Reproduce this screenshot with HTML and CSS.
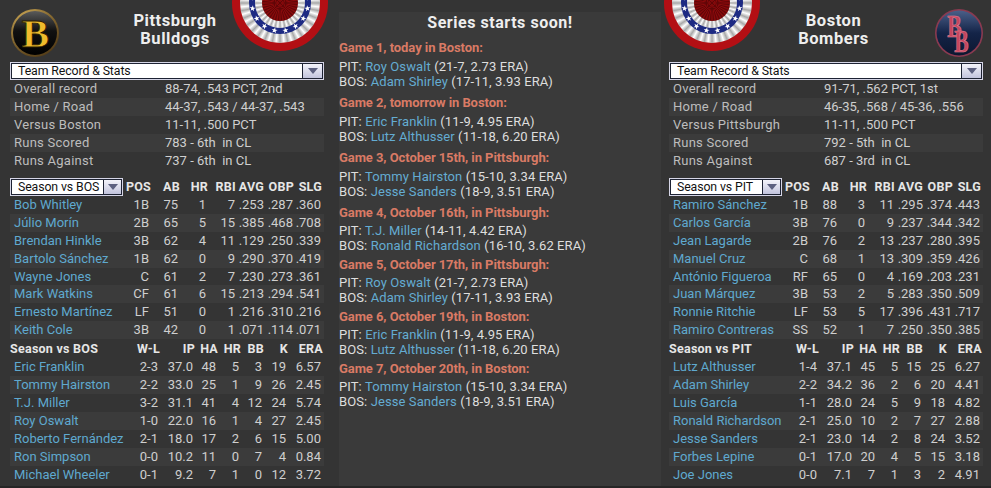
FILE: index.html
```html
<!DOCTYPE html>
<html lang="en">
<head>
<meta charset="utf-8">
<title>Series preview</title>
<link rel="stylesheet" href="styles.css">
</head>
<body>
<div class="page">
  <section class="team">
    <header class="team-head">
      <svg class="logo" viewBox="0 0 48 48">
        <defs>
          <radialGradient id="ringA" cx="35%" cy="25%" r="85%"><stop offset="0" stop-color="#d8b25a"/><stop offset="1" stop-color="#4a3413"/></radialGradient>
          <linearGradient id="ballA" x1="0" y1="0" x2="0" y2="1"><stop offset="0" stop-color="#5a5a5a"/><stop offset=".45" stop-color="#111"/><stop offset="1" stop-color="#000"/></linearGradient>
        </defs>
        <circle cx="24" cy="24" r="24" fill="url(#ringA)"/>
        <circle cx="24" cy="24" r="22" fill="url(#ballA)"/>
        <text class="logo-b" transform="translate(24.5 38) scale(1.08 1.05)">B</text>
      </svg>
      <h2 class="team-name">Pittsburgh<br>Bulldogs</h2>
      <div class="rosette rosette-l">
        <div class="ros-red"><div class="ros-pleat"><div class="ros-blue"><div class="ros-pleat ros-pleat-in"><div class="ros-core"></div></div></div></div></div>
        <svg class="ros-stars" viewBox="-48 -48 96 96"><defs><polygon id="st" points="0,-3 .8,-1 3,-1 1.2,.4 1.9,2.5 0,1.2 -1.9,2.5 -1.2,.4 -3,-1 -.8,-1" fill="#fff"/></defs>
          <use href="#st" transform="rotate(11.25) translate(0 28)"/><use href="#st" transform="rotate(33.75) translate(0 28)"/><use href="#st" transform="rotate(56.25) translate(0 28)"/><use href="#st" transform="rotate(78.75) translate(0 28)"/><use href="#st" transform="rotate(101.25) translate(0 28)"/><use href="#st" transform="rotate(-11.25) translate(0 28)"/><use href="#st" transform="rotate(-33.75) translate(0 28)"/><use href="#st" transform="rotate(-56.25) translate(0 28)"/><use href="#st" transform="rotate(-78.75) translate(0 28)"/><use href="#st" transform="rotate(-101.25) translate(0 28)"/>
        </svg>
      </div>
    </header>
    <div class="select select-wide"><span class="select-text">Team Record &amp; Stats</span><span class="select-btn"><i class="arrow"></i></span></div>
    <dl class="stats">
      <div class="stat"><dt>Overall record</dt><dd>88-74, .543 PCT, 2nd</dd></div>
      <div class="stat"><dt>Home / Road</dt><dd>44-37, .543 / 44-37, .543</dd></div>
      <div class="stat"><dt>Versus Boston</dt><dd>11-11, .500 PCT</dd></div>
      <div class="stat"><dt>Runs Scored</dt><dd>783 - 6th&nbsp; in CL</dd></div>
      <div class="stat"><dt>Runs Against</dt><dd>737 - 6th&nbsp; in CL</dd></div>
    </dl>
    <table class="grid batters">
      <thead><tr><th class="sel-cell"><div class="select select-small"><span class="select-text">Season vs BOS</span><span class="select-btn"><i class="arrow"></i></span></div></th><th>POS</th><th>AB</th><th>HR</th><th>RBI</th><th>AVG</th><th>OBP</th><th>SLG</th></tr></thead>
      <tbody>
        <tr><td>Bob Whitley</td><td>1B</td><td>75</td><td>1</td><td>7</td><td>.253</td><td>.287</td><td>.360</td></tr>
        <tr><td>Júlio Morín</td><td>2B</td><td>65</td><td>5</td><td>15</td><td>.385</td><td>.468</td><td>.708</td></tr>
        <tr><td>Brendan Hinkle</td><td>3B</td><td>62</td><td>4</td><td>11</td><td>.129</td><td>.250</td><td>.339</td></tr>
        <tr><td>Bartolo Sánchez</td><td>1B</td><td>62</td><td>0</td><td>9</td><td>.290</td><td>.370</td><td>.419</td></tr>
        <tr><td>Wayne Jones</td><td>C</td><td>61</td><td>2</td><td>7</td><td>.230</td><td>.273</td><td>.361</td></tr>
        <tr><td>Mark Watkins</td><td>CF</td><td>61</td><td>6</td><td>15</td><td>.213</td><td>.294</td><td>.541</td></tr>
        <tr><td>Ernesto Martínez</td><td>LF</td><td>51</td><td>0</td><td>1</td><td>.216</td><td>.310</td><td>.216</td></tr>
        <tr><td>Keith Cole</td><td>3B</td><td>42</td><td>0</td><td>1</td><td>.071</td><td>.114</td><td>.071</td></tr>
      </tbody>
    </table>
    <table class="grid pitchers">
      <thead><tr><th>Season vs BOS</th><th>W-L</th><th>IP</th><th>HA</th><th>HR</th><th>BB</th><th>K</th><th>ERA</th></tr></thead>
      <tbody>
        <tr><td>Eric Franklin</td><td>2-3</td><td>37.0</td><td>48</td><td>5</td><td>3</td><td>19</td><td>6.57</td></tr>
        <tr><td>Tommy Hairston</td><td>2-2</td><td>33.0</td><td>25</td><td>1</td><td>9</td><td>26</td><td>2.45</td></tr>
        <tr><td>T.J. Miller</td><td>3-2</td><td>31.1</td><td>41</td><td>4</td><td>12</td><td>24</td><td>5.74</td></tr>
        <tr><td>Roy Oswalt</td><td>1-0</td><td>22.0</td><td>16</td><td>1</td><td>4</td><td>27</td><td>2.45</td></tr>
        <tr><td>Roberto Fernández</td><td>2-1</td><td>18.0</td><td>17</td><td>2</td><td>6</td><td>15</td><td>5.00</td></tr>
        <tr><td>Ron Simpson</td><td>0-0</td><td>10.2</td><td>11</td><td>0</td><td>7</td><td>4</td><td>0.84</td></tr>
        <tr><td>Michael Wheeler</td><td>0-1</td><td>9.2</td><td>7</td><td>1</td><td>0</td><td>12</td><td>3.72</td></tr>
      </tbody>
    </table>
  </section>

  <main class="series">
    <h1 class="series-title">Series starts soon!</h1>
    <article class="game"><h3>Game 1, today in Boston:</h3><p>PIT: <a>Roy Oswalt</a> (21-7, 2.73 ERA)</p><p>BOS: <a>Adam Shirley</a> (17-11, 3.93 ERA)</p></article>
    <article class="game"><h3>Game 2, tomorrow in Boston:</h3><p>PIT: <a>Eric Franklin</a> (11-9, 4.95 ERA)</p><p>BOS: <a>Lutz Althusser</a> (11-18, 6.20 ERA)</p></article>
    <article class="game"><h3>Game 3, October 15th, in Pittsburgh:</h3><p>PIT: <a>Tommy Hairston</a> (15-10, 3.34 ERA)</p><p>BOS: <a>Jesse Sanders</a> (18-9, 3.51 ERA)</p></article>
    <article class="game"><h3>Game 4, October 16th, in Pittsburgh:</h3><p>PIT: <a>T.J. Miller</a> (14-11, 4.42 ERA)</p><p>BOS: <a>Ronald Richardson</a> (16-10, 3.62 ERA)</p></article>
    <article class="game"><h3>Game 5, October 17th, in Pittsburgh:</h3><p>PIT: <a>Roy Oswalt</a> (21-7, 2.73 ERA)</p><p>BOS: <a>Adam Shirley</a> (17-11, 3.93 ERA)</p></article>
    <article class="game"><h3>Game 6, October 19th, in Boston:</h3><p>PIT: <a>Eric Franklin</a> (11-9, 4.95 ERA)</p><p>BOS: <a>Lutz Althusser</a> (11-18, 6.20 ERA)</p></article>
    <article class="game"><h3>Game 7, October 20th, in Boston:</h3><p>PIT: <a>Tommy Hairston</a> (15-10, 3.34 ERA)</p><p>BOS: <a>Jesse Sanders</a> (18-9, 3.51 ERA)</p></article>
  </main>

  <section class="team team-right">
    <header class="team-head">
      <div class="rosette rosette-r">
        <div class="ros-red"><div class="ros-pleat"><div class="ros-blue"><div class="ros-pleat ros-pleat-in"><div class="ros-core"></div></div></div></div></div>
        <svg class="ros-stars" viewBox="-48 -48 96 96">
          <use href="#st" transform="rotate(11.25) translate(0 28)"/><use href="#st" transform="rotate(33.75) translate(0 28)"/><use href="#st" transform="rotate(56.25) translate(0 28)"/><use href="#st" transform="rotate(78.75) translate(0 28)"/><use href="#st" transform="rotate(101.25) translate(0 28)"/><use href="#st" transform="rotate(-11.25) translate(0 28)"/><use href="#st" transform="rotate(-33.75) translate(0 28)"/><use href="#st" transform="rotate(-56.25) translate(0 28)"/><use href="#st" transform="rotate(-78.75) translate(0 28)"/><use href="#st" transform="rotate(-101.25) translate(0 28)"/>
        </svg>
      </div>
      <h2 class="team-name">Boston<br>Bombers</h2>
      <svg class="logo logo-r" viewBox="0 0 48 48">
        <defs>
          <linearGradient id="ballB" x1="0" y1="0" x2="0" y2="1"><stop offset="0" stop-color="#4a5f88"/><stop offset=".5" stop-color="#142448"/><stop offset="1" stop-color="#0c1730"/></linearGradient>
        </defs>
        <circle cx="24" cy="24" r="24" fill="#8a3a50"/>
        <circle cx="24" cy="24" r="22.4" fill="url(#ballB)"/>
        <text class="logo-rb" transform="translate(19.5 28) scale(.8 1.15)">B</text>
        <text class="logo-rb" transform="translate(26.5 43) scale(.8 1.15)">B</text>
      </svg>
    </header>
    <div class="select select-wide"><span class="select-text">Team Record &amp; Stats</span><span class="select-btn"><i class="arrow"></i></span></div>
    <dl class="stats">
      <div class="stat"><dt>Overall record</dt><dd>91-71, .562 PCT, 1st</dd></div>
      <div class="stat"><dt>Home / Road</dt><dd>46-35, .568 / 45-36, .556</dd></div>
      <div class="stat"><dt>Versus Pittsburgh</dt><dd>11-11, .500 PCT</dd></div>
      <div class="stat"><dt>Runs Scored</dt><dd>792 - 5th&nbsp; in CL</dd></div>
      <div class="stat"><dt>Runs Against</dt><dd>687 - 3rd&nbsp; in CL</dd></div>
    </dl>
    <table class="grid batters">
      <thead><tr><th class="sel-cell"><div class="select select-small"><span class="select-text">Season vs PIT</span><span class="select-btn"><i class="arrow"></i></span></div></th><th>POS</th><th>AB</th><th>HR</th><th>RBI</th><th>AVG</th><th>OBP</th><th>SLG</th></tr></thead>
      <tbody>
        <tr><td>Ramiro Sánchez</td><td>1B</td><td>88</td><td>3</td><td>11</td><td>.295</td><td>.374</td><td>.443</td></tr>
        <tr><td>Carlos García</td><td>3B</td><td>76</td><td>0</td><td>9</td><td>.237</td><td>.344</td><td>.342</td></tr>
        <tr><td>Jean Lagarde</td><td>2B</td><td>76</td><td>2</td><td>13</td><td>.237</td><td>.280</td><td>.395</td></tr>
        <tr><td>Manuel Cruz</td><td>C</td><td>68</td><td>1</td><td>13</td><td>.309</td><td>.359</td><td>.426</td></tr>
        <tr><td>António Figueroa</td><td>RF</td><td>65</td><td>0</td><td>4</td><td>.169</td><td>.203</td><td>.231</td></tr>
        <tr><td>Juan Márquez</td><td>3B</td><td>53</td><td>2</td><td>5</td><td>.283</td><td>.350</td><td>.509</td></tr>
        <tr><td>Ronnie Ritchie</td><td>LF</td><td>53</td><td>5</td><td>17</td><td>.396</td><td>.431</td><td>.717</td></tr>
        <tr><td>Ramiro Contreras</td><td>SS</td><td>52</td><td>1</td><td>7</td><td>.250</td><td>.350</td><td>.385</td></tr>
      </tbody>
    </table>
    <table class="grid pitchers">
      <thead><tr><th>Season vs PIT</th><th>W-L</th><th>IP</th><th>HA</th><th>HR</th><th>BB</th><th>K</th><th>ERA</th></tr></thead>
      <tbody>
        <tr><td>Lutz Althusser</td><td>1-4</td><td>37.1</td><td>45</td><td>5</td><td>15</td><td>25</td><td>6.27</td></tr>
        <tr><td>Adam Shirley</td><td>2-2</td><td>34.2</td><td>36</td><td>2</td><td>6</td><td>20</td><td>4.41</td></tr>
        <tr><td>Luis García</td><td>1-1</td><td>28.0</td><td>24</td><td>5</td><td>9</td><td>18</td><td>4.82</td></tr>
        <tr><td>Ronald Richardson</td><td>2-1</td><td>25.0</td><td>10</td><td>2</td><td>7</td><td>27</td><td>2.88</td></tr>
        <tr><td>Jesse Sanders</td><td>2-1</td><td>23.0</td><td>14</td><td>2</td><td>8</td><td>24</td><td>3.52</td></tr>
        <tr><td>Forbes Lepine</td><td>0-1</td><td>17.0</td><td>20</td><td>4</td><td>5</td><td>15</td><td>3.18</td></tr>
        <tr><td>Joe Jones</td><td>0-0</td><td>7.1</td><td>7</td><td>1</td><td>3</td><td>2</td><td>4.91</td></tr>
      </tbody>
    </table>
  </section>
</div>
</body>
</html>
```
FILE: styles.css
```css
* { box-sizing: border-box; }
html, body { margin: 0; height: 100%; }
body {
  background: #343434;
  color: #cfcfcf;
  font-family: Roboto, "Liberation Sans", sans-serif;
  font-size: 13px;
  letter-spacing: 0;
  overflow: hidden;
}
.page {
  display: grid;
  grid-template-columns: 339px 322px 330px;
  height: 488px;
  overflow: hidden;
  border-bottom: 2px solid #262626;
}
.team { padding: 0 7px 0 10px; position: relative; }
.team-right { padding: 0 8px 0 8px; }
.team-head {
  height: 62px;
  position: relative;
  display: flex;
  justify-content: center;
}
.team-name {
  margin: 0;
  padding: 12px 0 0 8px;
  width: 100%;
  text-align: center;
  color: #eee;
  font-size: 16.5px;
  line-height: 18px;
  font-weight: 700;
  letter-spacing: .55px;
}
.team-right .team-name { padding-left: 15px; }
.logo { position: absolute; left: 1px; top: 9px; width: 48px; height: 48px; }
.logo-r { left: auto; right: 0; }
.logo-b {
  font-family: "Liberation Serif", serif;
  font-weight: 700;
  font-size: 38px;
  fill: #efbb2c;
  stroke: #2a1c00;
  stroke-width: .8px;
  text-anchor: middle;
}
.logo-rb {
  font-family: "Liberation Serif", serif;
  font-weight: 700;
  font-size: 27px;
  fill: #c4465f;
  stroke: #e58a9b;
  stroke-width: .5px;
  text-anchor: middle;
}
.rosette { position: absolute; top: -45px; width: 96px; height: 96px; }
.rosette-l { left: 222px; }
.rosette-r { left: -5px; }
.ros-red, .ros-pleat, .ros-blue, .ros-core {
  border-radius: 50%;
  display: flex;
  align-items: center;
  justify-content: center;
}
.ros-red { width: 96px; height: 96px; background: radial-gradient(circle, #b30f14 85%, #6e0a0c 100%); }
.ros-pleat {
  width: 80px; height: 80px;
  background: repeating-conic-gradient(from 5.6deg, #fff 0deg, #a8a8a8 5.6deg, #fff 11.25deg);
}
.ros-blue { width: 62px; height: 62px; background: #1d2a83; }
.ros-pleat-in { width: 50px; height: 50px; }
.ros-core {
  width: 36px; height: 36px;
  background: repeating-conic-gradient(#8f0a0c 0deg, #5e0506 5deg, #8f0a0c 10deg);
}
.ros-stars { position: absolute; inset: 0; width: 96px; height: 96px; }

.select {
  display: flex;
  background: #fff;
  border: 1px solid #d5d5e6;
  outline: 1px solid #1d2233;
  outline-offset: -2px;
  color: #111;
  height: 18px;
  font-size: 12.3px;
  line-height: 16px;
  letter-spacing: -.1px;
}
.select-wide { width: 314px; }
.select-small { width: 113px; }
.select-small .select-btn { width: 18px; }
.select-text { flex: 1; padding-left: 7px; white-space: nowrap; overflow: hidden; text-align: left; font-weight: 400; }
.select-btn {
  width: 20px;
  border-left: 1px solid #1d2233;
  background: linear-gradient(#f3f3fa, #c2c4dd);
  display: flex;
  align-items: center;
  justify-content: center;
  margin: 1px 1px 1px 0;
}
.arrow {
  width: 0; height: 0;
  border-left: 5px solid transparent;
  border-right: 5px solid transparent;
  border-top: 6px solid #5c6080;
}

.stats { margin: 0; width: 314px; }
.stat {
  display: grid;
  grid-template-columns: 151px 1fr;
  height: 18px;
  line-height: 18px;
  padding-left: 4px;
}
.stat:nth-child(even) { background: #3b3b3b; }
.stat dt { color: #bdbdbd; letter-spacing: .25px; white-space: nowrap; }
.stat dd { margin: 0; color: #cfcfcf; white-space: nowrap; }

.grid { border-collapse: collapse; table-layout: fixed; width: 314px; }
.batters { margin-top: 8px; }
.pitchers { margin-top: 1px; }
.grid th, .grid td { padding: 0; height: 18px; line-height: 18px; text-align: right; white-space: nowrap; }
.grid th { color: #e6e6e6; font-weight: 700; font-size: 12.5px; letter-spacing: .25px; }
.grid td { color: #cfcfcf; padding-right: 2px; }
.grid td:first-child {
  color: #5fa9cf;
  text-align: left;
  padding: 0 0 0 4px;
}
.grid th:first-child { text-align: left; }
.grid tbody tr:nth-child(even) td { background: #3b3b3b; }
.batters tbody tr:nth-child(5) td { height: 17px; line-height: 17px; }
.sel-cell { overflow: visible; }

.batters th:nth-child(1) { width: 113px; }
.batters th:nth-child(2) { width: 28px; }
.batters th:nth-child(3) { width: 29px; }
.batters th:nth-child(4) { width: 28px; }
.batters th:nth-child(5) { width: 28px; }
.batters th:nth-child(6) { width: 28px; }
.batters th:nth-child(7) { width: 30px; }
.batters th:nth-child(8) { width: 30px; padding-right: 2px; }
.batters td:nth-child(n+5) { padding-right: 1px; }
.batters td:nth-child(6) { padding-right: 0; }
.batters td:nth-child(8) { padding-right: 3px; }

.pitchers th:nth-child(1) { width: 126px; }
.pitchers th:nth-child(2) { width: 24px; }
.pitchers th:nth-child(3) { width: 35px; }
.pitchers th:nth-child(4) { width: 23px; }
.pitchers th:nth-child(5) { width: 23px; }
.pitchers th:nth-child(6) { width: 23px; }
.pitchers th:nth-child(7) { width: 24px; }
.pitchers th:nth-child(8) { width: 36px; padding-right: 1px; }
.pitchers td:nth-child(8) { padding-right: 3px; }

.series {
  background: #3a3a3a;
  margin-top: 12px;
}
.series-title {
  margin: 0;
  text-align: center;
  color: #eee;
  font-size: 16px;
  line-height: 22px;
  font-weight: 700;
  letter-spacing: .55px;
}
.game { margin-top: 5px; }
.game:nth-child(n+6) { margin-top: 3px; }
.game h3 {
  margin: 0 0 3px;
  color: #d97a65;
  font-size: 13px;
  line-height: 17px;
  font-weight: 700;
  letter-spacing: -.07px;
}
.game:nth-child(n+5) h3 { margin-bottom: 2px; }
.game p { margin: 0; color: #dedede; line-height: 15px; letter-spacing: .1px; }
.game a { color: #64acd2; }
```
